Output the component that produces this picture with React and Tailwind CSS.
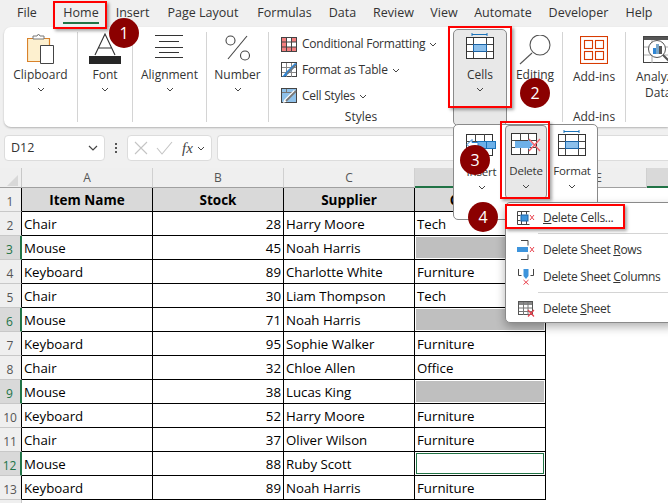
import React from "react";

const tabs = [
  ["File", "w-[54px]"],
  ["Home", "w-[54px]"],
  ["Insert", "w-[49px]"],
  ["Page Layout", "w-[92px]"],
  ["Formulas", "w-[71px]"],
  ["Data", "w-[45px]"],
  ["Review", "w-[57px]"],
  ["View", "w-[44px]"],
  ["Automate", "w-[74px]"],
  ["Developer", "w-[77px]"],
  ["Help", "w-[44px]"],
  ["Acrobat", "w-[60px]"],
];

const rows = [
  ["Chair", 28, "Harry Moore", "Tech"],
  ["Mouse", 45, "Noah Harris", null],
  ["Keyboard", 89, "Charlotte White", "Furniture"],
  ["Chair", 30, "Liam Thompson", "Tech"],
  ["Mouse", 71, "Noah Harris", null],
  ["Keyboard", 95, "Sophie Walker", "Furniture"],
  ["Chair", 32, "Chloe Allen", "Office"],
  ["Mouse", 38, "Lucas King", null],
  ["Keyboard", 52, "Harry Moore", "Furniture"],
  ["Chair", 37, "Oliver Wilson", "Furniture"],
  ["Mouse", 88, "Ruby Scott", ""],
  ["Keyboard", 89, "Noah Harris", "Furniture"],
];

const Chevron = ({ className = "" }) => (
  <svg width="8" height="5" viewBox="0 0 8 5" className={className}>
    <path d="M1 1l3 3 3-3" fill="none" stroke="#444" strokeWidth="1" />
  </svg>
);

const ClipboardIcon = () => (
  <svg width="28" height="31" viewBox="0 0 28 31">
    <path d="M.5 5.500h22v23H.5z" fill="#fdf0cf" stroke="#d9822b" strokeWidth="1.2" />
    <path d="M6 6V3h4l1.500-2L13 3h4v3z" fill="#fff" stroke="#777" />
    <path d="M13.500 12.500h13v18h-13z" fill="#fff" stroke="#444" />
  </svg>
);

const FontIcon = () => (
  <svg width="32" height="31" viewBox="0 0 32 31">
    <path d="M6 22L16 1l10 21M9 15h14" fill="none" stroke="#333" strokeWidth="1.1" />
    <rect x="0" y="23" width="32" height="8" fill="#262626" />
  </svg>
);

const AlignIcon = () => (
  <svg width="29" height="23" viewBox="0 0 29 23" stroke="#333" strokeWidth="1" className="mb-[6px]">
    <path d="M0 .5h28M4 6.500h20M0 12.500h28M4 17.500h20M0 22.500h28" />
  </svg>
);

const PercentIcon = () => (
  <svg width="26" height="26" viewBox="0 0 26 26" fill="none" stroke="#444" strokeWidth="1.1" className="mb-[3px]">
    <ellipse cx="5.500" cy="5.500" rx="4.500" ry="4.500" />
    <ellipse cx="20" cy="20.500" rx="4.500" ry="4.500" />
    <path d="M3 24L22 1" />
  </svg>
);

const CondFormatIcon = () => (
  <svg width="16" height="15" viewBox="0 0 16 15">
    <rect x=".5" y=".5" width="15" height="14" fill="#fff" stroke="#444" />
    <path d="M1 1h5v4H1zM10 1h5v4h-5zM1 10h14v4H1zM1 5h5v5H1z" fill="#f47f7f" />
    <path d="M5.500 0v15M10.500 0v15M0 5h16M0 10h16" stroke="#444" strokeWidth="1" />
  </svg>
);

const TableIcon = () => (
  <svg width="17" height="16" viewBox="0 0 17 16">
    <rect x=".5" y=".5" width="15" height="14" fill="#fff" stroke="#444" />
    <path d="M5.500 1v14M10.500 1v14M1 5.500h14M1 10.500h14" stroke="#888" />
    <path d="M1 15l4-1 8-8 3-4-2-1-9 9z" fill="#2e86d6" />
    <path d="M6 12l9-9" stroke="#777" strokeWidth="1.5" />
  </svg>
);

const CellStyleIcon = () => (
  <svg width="17" height="16" viewBox="0 0 17 16">
    <rect x=".5" y=".5" width="15" height="14" fill="#8fc1ea" stroke="#444" />
    <path d="M5.500 1v3M1 4.500h14" stroke="#777" />
    <path d="M2 15l3-1 10-10-2-2L3 12z" fill="#fff" />
    <path d="M5 13L15 3" stroke="#777" strokeWidth="1.8" />
  </svg>
);

const GridWithBracket = () => (
  <svg width="28" height="26" viewBox="0 0 28 26">
    <path d="M6 1.500h15M6 0v3M21 0v3" stroke="#1a73ba" fill="none" />
    <rect x=".5" y="4.500" width="27" height="21" fill="#fff" stroke="#333" />
    <rect x="8" y="11" width="13" height="7" fill="#8cc0ec" />
    <path d="M7.500 5v20M20.500 5v20M1 11.500h26M1 18.500h26" stroke="#444" fill="none" />
    <rect x="7.500" y="11.500" width="13" height="7" fill="none" stroke="#1a63a5" />
  </svg>
);

const SearchIcon = () => (
  <svg width="32" height="30" viewBox="0 0 32 30" fill="none" stroke="#555" strokeWidth="1.1">
    <circle cx="21" cy="10" r="10" />
    <path d="M13 18L1 29" />
  </svg>
);

const AddinsIcon = () => (
  <svg width="28" height="28" viewBox="0 0 28 28" fill="none" stroke="#d83b01" strokeWidth="1.1">
    <rect x=".5" y=".5" width="27" height="27" />
    <rect x="4.500" y="4.500" width="8" height="8" />
    <rect x="15.500" y="4.500" width="8" height="8" />
    <rect x="4.500" y="15.500" width="8" height="8" />
    <rect x="15.500" y="15.500" width="8" height="8" />
  </svg>
);

const AnalyzeIcon = () => (
  <svg width="32" height="28" viewBox="0 0 32 28">
    <rect x=".5" y=".5" width="31" height="26" fill="#fff" stroke="#444" />
    <rect x="1" y="1" width="30" height="3" fill="#555" />
    <path d="M9 4v23M1 11h30M1 19h30" stroke="#aaa" />
    <circle cx="14" cy="13" r="8.500" fill="#fff" stroke="#555" />
    <rect x="10" y="12" width="3" height="6" fill="#2e86d6" />
    <rect x="13" y="8" width="3" height="10" fill="#7aa7c9" />
    <rect x="16" y="10" width="3" height="8" fill="#555" />
    <path d="M20 19l7 7" stroke="#555" strokeWidth="2" />
  </svg>
);

const InsertIcon = () => (
  <svg width="31" height="22" viewBox="0 0 31 22">
    <rect x=".5" y=".5" width="26" height="21" fill="#fff" stroke="#333" />
    <path d="M9.500 0v22M18.500 0v22M0 7.500h27M0 14.500h27" stroke="#444" />
    <rect x="11.500" y="7.500" width="18" height="7" fill="#6db0e8" stroke="#1a73ba" />
    <path d="M20.500 8v6" stroke="#1a73ba" />
    <path d="M1 10.500l5-5v3h6v4H6v3z" fill="#fff" stroke="#2e86d6" />
  </svg>
);

const DeleteIcon = () => (
  <svg width="31" height="22" viewBox="0 0 31 22">
    <rect x=".5" y=".5" width="25" height="21" fill="#fff" stroke="#333" />
    <path d="M9.500 0v22M17.500 0v22M0 7.500h26M0 14.500h26" stroke="#444" />
    <rect x="4" y="8" width="13" height="7" fill="#6db0e8" />
    <path d="M17 6.500l5 5-5 5z" fill="#6db0e8" />
    <path d="M18 6l11 12M29 6L18 18" stroke="#f0606a" strokeWidth="1.3" />
  </svg>
);

const DeleteCellsIcon = () => (
  <svg width="18" height="14" viewBox="0 0 18 14">
    <path d="M.5.500h12M.5 13.500h12M.5.500v13M4.500.500v13M.5 4.500h3M.5 9.500h3M9.500.500v3M9.500 10v3.500" stroke="#444" fill="none" />
    <rect x="4" y="4" width="7" height="6" fill="#3d94dc" stroke="#1a63a5" />
    <path d="M13 4l4 5M17 4l-4 5" stroke="#e8404c" />
  </svg>
);

const DeleteRowsIcon = () => (
  <svg width="18" height="20" viewBox="0 0 18 20">
    <path d="M4 .5h7v5M4 19.500h7v-5" stroke="#444" fill="none" />
    <rect x="0" y="7" width="11" height="5" fill="#3d94dc" />
    <path d="M13 7l4 5M17 7l-4 5" stroke="#e8404c" />
  </svg>
);

const DeleteColsIcon = () => (
  <svg width="16" height="16" viewBox="0 0 16 16">
    <path d="M.5 0v6.500h3M15.500 0v6.500h-3" stroke="#444" fill="none" />
    <path d="M5.500 0h5v7l-2.500 3-2.500-3z" fill="#3d94dc" />
    <path d="M5.500 11l5 4.500M10.500 11l-5 4.500" stroke="#e8404c" />
  </svg>
);

const DeleteSheetIcon = () => (
  <svg width="17" height="16" viewBox="0 0 17 16">
    <rect x=".5" y=".5" width="14" height="13" fill="#fff" stroke="#555" />
    <path d="M1 1h13v3H1z" fill="#888" />
    <path d="M5.500 1v13M10 1v13M1 7h13M1 10.500h13" stroke="#777" />
    <path d="M10 9l6 6.500M16 9l-6 6.500" stroke="#e8404c" strokeWidth="1.2" />
  </svg>
);

const Separator = () => <div className="my-[5px] w-px self-stretch bg-[#d4d4d4]" />;

const BigButton = ({ icon, label, width }) => (
  <div className={`flex flex-col items-center pt-[5px] ${width}`}>
    <div className="flex h-[32px] items-end justify-center">{icon}</div>
    <span className="mt-[3px] text-[12px] leading-[16px] text-[#333]">{label}</span>
    <Chevron className="mt-[4px]" />
  </div>
);

const StyleRow = ({ icon, label }) => (
  <div className="flex h-[26px] items-center">
    <div className="flex w-[21px] justify-start">{icon}</div>
    <span className="text-[12px] tracking-[-0.25px] text-[#333]">{label}</span>
    <Chevron className="ml-[4px]" />
  </div>
);

const Ribbon = () => (
  <div className="ml-[4px] flex h-[100px] rounded-l-[7px] bg-white shadow-[0_1px_2px_rgba(0,0,0,0.25)]">
    <BigButton icon={<ClipboardIcon />} label="Clipboard" width="w-[73px]" />
    <Separator />
    <BigButton icon={<FontIcon />} label="Font" width="w-[54px]" />
    <Separator />
    <BigButton icon={<AlignIcon />} label="Alignment" width="w-[73px]" />
    <Separator />
    <BigButton icon={<PercentIcon />} label="Number" width="w-[61px]" />
    <Separator />
    <div className="flex w-[185px] flex-col pl-[12px] pt-[4px]">
      <StyleRow icon={<CondFormatIcon />} label="Conditional Formatting" />
      <StyleRow icon={<TableIcon />} label="Format as Table" />
      <StyleRow icon={<CellStyleIcon />} label="Cell Styles" />
      <span className="w-[160px] text-center text-[12px] leading-[16px] text-[#333]">Styles</span>
    </div>
    <div className="w-[54px]" />
    <div className="flex w-[54px] flex-col items-center pt-[8px]">
      <SearchIcon />
      <span className="mt-[2px] text-[12px] leading-[16px] text-[#333]">Editing</span>
    </div>
    <Separator />
    <div className="flex w-[62px] flex-col items-center pt-[9px]">
      <AddinsIcon />
      <span className="mt-[5px] text-[12px] leading-[16px] text-[#333]">Add-ins</span>
      <span className="mt-[24px] text-[12px] leading-[16px] text-[#333]">Add-ins</span>
    </div>
    <Separator />
    <div className="flex flex-1 flex-col items-start overflow-hidden pl-[10px] pt-[9px]">
      <div className="ml-[7px]">
        <AnalyzeIcon />
      </div>
      <span className="mt-[5px] whitespace-nowrap text-[12px] leading-[16px] text-[#333]">Analyze</span>
      <span className="ml-[9px] text-[12px] leading-[16px] text-[#333]">Data</span>
    </div>
  </div>
);

const FormulaBar = () => (
  <div className="mt-[8px] flex h-[26px] items-stretch pl-[4px]">
    <div className="flex w-[101px] items-center justify-between rounded-[4px] border border-[#dcdcdc] bg-white pl-[6px] pr-[6px] text-[12.500px] text-[#333]">
      D12
      <svg width="10" height="6" viewBox="0 0 10 6">
        <path d="M1 1l4 4 4-4" fill="none" stroke="#444" strokeWidth="1.2" />
      </svg>
    </div>
    <div className="flex w-[22px] flex-col items-center justify-center gap-[2px]">
      <i className="h-[2px] w-[2px] bg-[#555]" />
      <i className="h-[2px] w-[2px] bg-[#555]" />
      <i className="h-[2px] w-[2px] bg-[#555]" />
    </div>
    <div className="flex w-[85px] items-center rounded-[4px] border border-[#dcdcdc] bg-white pl-[6px]">
      <svg width="14" height="14" viewBox="0 0 14 14">
        <path d="M1 1l12 12M13 1L1 13" stroke="#c4c4c4" strokeWidth="1.100" />
      </svg>
      <svg width="18" height="14" viewBox="0 0 18 14" className="ml-[8px]">
        <path d="M1 7l5 6L16 1" fill="none" stroke="#c4c4c4" strokeWidth="1.100" />
      </svg>
      <span className="ml-[8px] font-['Liberation_Serif',serif] text-[15px] italic leading-none text-[#444]">fx</span>
      <Chevron className="ml-[4px]" />
    </div>
    <div className="ml-[5px] flex-1 rounded-l-[4px] border border-r-0 border-[#dcdcdc] bg-white" />
  </div>
);

const ColumnHeaders = () => (
  <div className="mt-[7px] flex h-[20px] overflow-hidden text-[12px] text-[#555]">
    <div className="relative w-[22px] shrink-0 border-r border-b border-r-[#c8c8c8] border-b-[#a0a0a0] bg-[#efefef]">
      <svg width="11" height="11" viewBox="0 0 11 11" className="absolute left-[7px] top-[7px]">
        <path d="M11 0v11H0z" fill="#d8d8d8" />
      </svg>
    </div>
    {["A", "B", "C"].map((c) => (
      <div key={c} className="flex w-[131px] shrink-0 items-center justify-center border-r border-b border-r-[#d0d0d0] border-b-[#a0a0a0] bg-[#efefef] pt-[1px]">
        {c}
      </div>
    ))}
    <div className="flex w-[131px] shrink-0 items-center justify-center border-b-2 border-[#217346] bg-[#d9d9d9] pt-[1px]">D</div>
    <div className="flex w-[101px] shrink-0 items-center justify-center border-r border-b border-r-[#d0d0d0] border-b-[#a0a0a0] bg-[#efefef] pl-[5px] pt-[1px]">E</div>
    <div className="flex w-[131px] shrink-0 items-center justify-center border-b-2 border-[#217346] bg-[#d9d9d9] pt-[1px]">F</div>
  </div>
);

const RowHeader = ({ n, selected }) => (
  <div
    className={`flex w-[22px] shrink-0 items-center justify-center border-b pr-[1px] pt-[5px] text-[12px] ${
      selected
        ? "border-r-2 border-b-[#c8c8c8] border-r-[#217346] bg-[#d9d9d9] text-[#217346]"
        : "border-r border-b-[#c8c8c8] border-r-black bg-[#efefef] text-[#555]"
    }`}
  >
    {n}
  </div>
);

const Sheet = () => (
  <div className="flex flex-col text-[13.250px] text-black">
    <div className="flex h-[24px]">
      <RowHeader n={1} />
      {["Item Name", "Stock", "Supplier", "Category"].map((h) => (
        <div key={h} className="flex w-[131px] items-center justify-center border-r border-b border-r-black border-b-black bg-[#d9d9d9] pt-[1px] text-[13.500px] font-bold">
          {h}
        </div>
      ))}
    </div>
    {rows.map((r, i) => {
      const selected = r[3] === null || r[3] === "";
      return (
        <div key={i} className="flex h-[24px]">
          <RowHeader n={i + 2} selected={selected} />
          <div className="flex w-[131px] items-center border-r border-b border-black pl-[2px] pt-[2px]">{r[0]}</div>
          <div className="flex w-[131px] items-center justify-end border-r border-b border-black pr-[2px] pt-[2px]">{r[1]}</div>
          <div className="flex w-[131px] items-center border-r border-b border-black pl-[2px] pt-[2px]">{r[2]}</div>
          <div className={`flex w-[131px] items-center border-r border-b border-black ${r[3] ? "pl-[2px] pt-[2px]" : "p-[1px]"}`}>
            {r[3] === null && <div className="h-full w-full bg-[#bfbfbf]" />}
            {r[3] === "" && <div className="h-full w-full border border-[#217346]" />}
            {r[3]}
          </div>
        </div>
      );
    })}
    <div className="flex h-[4px]">
      <div className="w-[22px] border-r border-[#c8c8c8] bg-[#efefef]" />
    </div>
  </div>
);

const Badge = ({ n, className }) => (
  <div className={`absolute flex h-[30px] w-[30px] items-center justify-center rounded-full bg-[#8b0000] text-[16px] text-white ${className}`}>
    {n}
  </div>
);

const RedBox = ({ className }) => (
  <div className={`absolute border-[2px] border-[#ff0000] shadow-[2px_2px_3px_rgba(0,0,0,0.35)] ${className}`} />
);

const CellsPopup = () => (
  <div className="absolute left-[453px] top-[124px] flex h-[96px] w-[145px] rounded-[5px] border border-[#8a8a8a] bg-white pl-[4px] text-[11.500px] tracking-[-0.2px] text-[#333]">
    <div className="flex w-[47px] flex-col items-center pt-[9px]">
      <InsertIcon />
      <span className="mt-[8px] leading-[16px]">Insert</span>
      <Chevron className="mt-[5px]" />
    </div>
    <div className="flex h-[74px] w-[42px] flex-col items-center rounded-[4px] border border-[#8a8a8a] bg-[#e8e8e8] pt-[7px]">
      <DeleteIcon />
      <span className="mt-[8px] leading-[16px]">Delete</span>
      <Chevron className="mt-[5px]" />
    </div>
    <div className="flex flex-1 flex-col items-center pt-[5px]">
      <GridWithBracket />
      <span className="mt-[7px] leading-[16px]">Format</span>
      <Chevron className="mt-[5px]" />
    </div>
  </div>
);

const MenuItem = ({ icon, children }) => (
  <div className="flex h-[27px] items-center">
    <div className="flex w-[37px] shrink-0 justify-center pl-[3px]">{icon}</div>
    <span className="whitespace-nowrap text-[12px] tracking-[-0.3px] text-[#333]">{children}</span>
  </div>
);

const DeleteMenu = () => (
  <div className="absolute left-[505px] top-[202px] w-[170px] rounded-l-[5px] border border-[#8a8a8a] bg-white pt-[1px] shadow-[0_4px_10px_rgba(0,0,0,0.3)]">
    <MenuItem icon={<DeleteCellsIcon />}>
      <u>D</u>elete Cells...
    </MenuItem>
    <div className="my-[2px] ml-[32px] h-px bg-[#d4d4d4]" />
    <MenuItem icon={<DeleteRowsIcon />}>
      Delete Sheet <u>R</u>ows
    </MenuItem>
    <MenuItem icon={<DeleteColsIcon />}>
      Delete Sheet <u>C</u>olumns
    </MenuItem>
    <div className="my-[2px] ml-[32px] h-px bg-[#d4d4d4]" />
    <MenuItem icon={<DeleteSheetIcon />}>
      Delete <u>S</u>heet
    </MenuItem>
  </div>
);

export default function App() {
  return (
    <div className="relative h-[503px] w-[668px] overflow-hidden bg-white font-['Open_Sans','Noto_Sans',sans-serif]">
      <div className="bg-[#f0f0f0]">
        <div className="flex h-[27px] items-center overflow-hidden whitespace-nowrap text-[12.500px] text-[#333]">
          {tabs.map(([t, w]) => (
            <div key={t} className={`relative flex h-full shrink-0 items-center justify-center ${w}`}>
              {t}
              {t === "Home" && <div className="absolute bottom-[3px] h-[2px] w-[36px] bg-[#217346]" />}
            </div>
          ))}
        </div>
        <Ribbon />
        <FormulaBar />
        <ColumnHeaders />
      </div>
      <Sheet />

      {/* the Cells button stays pressed, its flyout and the callouts lie over the sheet */}
      <div className="absolute left-[453px] top-[29px] flex h-[97px] w-[54px] flex-col items-center rounded-[5px] border border-[#8a8a8a] bg-[#e8e8e8] pt-[3px] text-[12px] text-[#333]">
        <GridWithBracket />
        <span className="mt-[8px] leading-[16px]">Cells</span>
        <Chevron className="mt-[4px]" />
      </div>
      <CellsPopup />
      <DeleteMenu />

      <RedBox className="left-[53px] top-[1px] h-[28px] w-[54px]" />
      <RedBox className="left-[448px] top-[26px] h-[82px] w-[64px]" />
      <RedBox className="left-[500px] top-[121px] h-[78px] w-[50px]" />
      <RedBox className="left-[505px] top-[204px] h-[25px] w-[120px]" />

      <Badge n={1} className="left-[109px] top-[18px]" />
      <Badge n={2} className="left-[520px] top-[78px]" />
      <Badge n={3} className="left-[460px] top-[145px]" />
      <Badge n={4} className="left-[468px] top-[202px]" />
    </div>
  );
}
